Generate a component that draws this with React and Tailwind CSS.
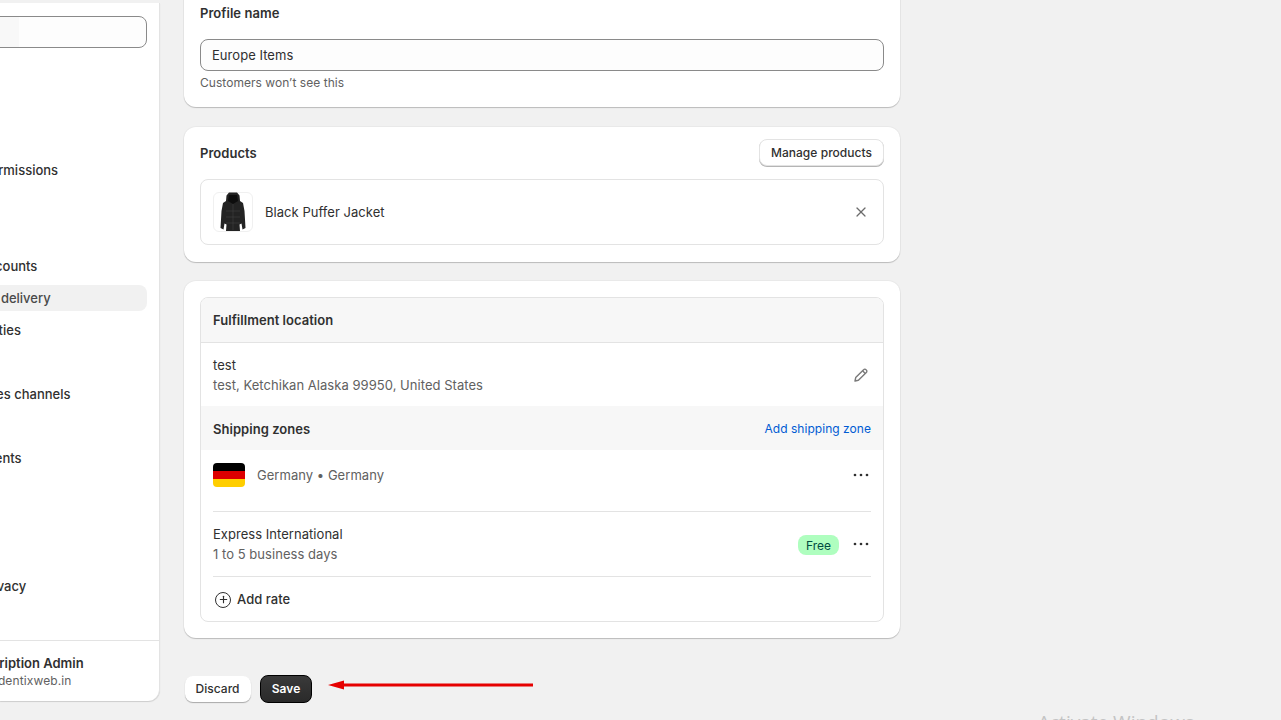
import { Plus, X } from "lucide-react";

const font = { fontFamily: "Inter, 'Noto Sans', sans-serif" };

const Dots = () => (
  <svg width="16" height="4" viewBox="0 0 16 4" className="fill-[#303030]">
    <circle cx="2" cy="2" r="1.35" />
    <circle cx="8" cy="2" r="1.35" />
    <circle cx="14" cy="2" r="1.35" />
  </svg>
);

const Jacket = () => (
  <svg width="30" height="40" viewBox="0 0 30 40">
    <path
      d="M11 0.5h8l2.5 3 .5 5.5 3 2 1.5 8 1 17-3 1.500-1-6-2 1 .5 6.500H8l.5-6.500-2-1-1 6-3-1.500 1-17 1.500-8 3-2 .5-5.500z"
      fill="#232323"
    />
    <path d="M11 3h8l1 6-5 3-5-3z" fill="#0d0d0d" />
    <path d="M15 12v26M8 19h14M8 25h14M8 31h14" stroke="#3d3d3d" strokeWidth="0.7" fill="none" />
  </svg>
);

const Pencil = () => (
  <svg width="16" height="16" viewBox="0 0 16 16" fill="none" stroke="#7a7a7a" strokeWidth="1.4" strokeLinejoin="round">
    <path d="M2 14l.7-3.400 7.900-7.900a1.700 1.700 0 0 1 2.500 0l.2.2a1.700 1.700 0 0 1 0 2.500l-7.900 7.900z" />
    <path d="M9.600 3.800l2.600 2.600" />
  </svg>
);

const NavItem = ({ label, active, className = "" }) => (
  <div
    className={`h-[26px] pt-px flex items-center rounded-lg -ml-[90px] pl-[6px] mr-3 whitespace-nowrap text-[13px] font-medium ${
      active ? "bg-[#f1f1f1] text-[#4a4a4a]" : "text-[#303030]"
    } ${className}`}
  >
    {label}
  </div>
);

const Sidebar = () => (
  <aside className="w-[160px] h-[698px] mt-[3px] shrink-0 bg-white border-r border-[#e3e3e3] rounded-br-xl shadow-[0_1px_1px_rgba(0,0,0,0.15)] overflow-hidden flex flex-col">
    <div className="flex-1 pt-[13px]">
      <div className="h-8 -ml-4 mr-3 rounded-lg border border-[#8a8a8a] bg-[#fdfdfd] flex">
        <div className="w-[34px] bg-[#f8f8f8] rounded-l-lg" />
      </div>
      <NavItem label="Users and permissions" className="mt-[109px]" />
      <NavItem label="Customer accounts" className="mt-[70px]" />
      <NavItem label="Shipping and delivery" active className="mt-[6px]" />
      <NavItem label="Taxes and duties" className="mt-[6px]" />
      <NavItem label="Apps and sales channels" className="mt-[38px]" />
      <NavItem label="Customer events" className="mt-[38px]" />
      <NavItem label="Customer privacy" className="mt-[102px]" />
    </div>
    <div className="h-[61px] border-t border-[#e3e3e3] -ml-[40px] pt-[13px] whitespace-nowrap">
      <div className="text-[13px] font-semibold text-[#303030] leading-[18px]">Subscription Admin</div>
      <div className="mt-px -ml-[9px] text-xs text-[#616161] leading-4 tracking-[0.01em]">admin@dentixweb.in</div>
    </div>
  </aside>
);

const Card = ({ children, className = "" }) => (
  <section className={`bg-white rounded-xl shadow-[0_1px_1px_rgba(0,0,0,0.2),0_0_0_1px_rgba(0,0,0,0.03)] ${className}`}>
    {children}
  </section>
);

export default function App() {
  return (
    <div className="relative h-[720px] w-full overflow-hidden bg-[#f1f1f1] flex text-[13px] text-[#303030]" style={font}>
      <Sidebar />

      <main className="w-[716px] ml-6 -mt-[14px] flex flex-col shrink-0 tracking-[0.04px]">
        <Card className="h-[121px] px-4 pt-[17px]">
          <h2 className="font-semibold leading-5">Profile name</h2>
          <div className="mt-4 h-8 pt-px rounded-lg border border-[#8a8a8a] bg-[#fdfdfd] pl-[11px] flex items-center">
            Europe Items
          </div>
          <p className="mt-[4px] text-xs text-[#616161] leading-4">Customers won’t see this</p>
        </Card>

        <Card className="mt-[20px] h-[135px] p-4 pt-[11px]">
          <div className="flex items-center justify-between h-[28px]">
            <h2 className="mt-1 font-semibold">Products</h2>
            <button className="h-[27px] w-[125px] pt-px rounded-lg bg-white border border-[#e3e3e3] shadow-[0_1px_0_#b5b5b5] text-xs font-medium">
              Manage products
            </button>
          </div>
          <div className="mt-[13px] h-[66px] rounded-lg border border-[#e3e3e3] flex items-center pl-3 pr-[14px]">
            <div className="w-10 h-10 rounded-md border border-[#f0f0f0] flex items-center justify-center">
              <Jacket />
            </div>
            <span className="ml-3 pt-[2px] flex-1">Black Puffer Jacket</span>
            <X size={16} strokeWidth={1.8} className="text-[#6b6b6b]" />
          </div>
        </Card>

        <Card className="mt-[19px] h-[357px] p-4">
          <div className="h-[325px] rounded-lg border border-[#e3e3e3] overflow-hidden">
            <div className="h-[45px] pt-[2px] bg-[#f7f7f7] border-b border-[#e3e3e3] px-3 flex items-center font-semibold">
              Fulfillment location
            </div>
            <div className="h-[63px] pl-3 pr-[14px] flex items-center justify-between">
              <div className="leading-5">
                <div>test</div>
                <div className="text-[#616161]">test, Ketchikan Alaska 99950, United States</div>
              </div>
              <Pencil />
            </div>
            <div className="h-[44px] pt-[2px] bg-[#f7f7f7] px-3 flex items-center justify-between">
              <span className="mt-[2px] font-semibold">Shipping zones</span>
              <a className="text-xs text-[#005bd3]">Add shipping zone</a>
            </div>
            <div className="mx-3 h-[62px] border-b border-[#e3e3e3] pt-[13px] flex items-start">
              <div className="w-8 h-6 rounded overflow-hidden flex flex-col shrink-0">
                <div className="flex-1 bg-black" />
                <div className="flex-1 bg-[#dd0000]" />
                <div className="flex-1 bg-[#ffce00]" />
              </div>
              <span className="ml-3 flex-1 leading-6 text-[#616161]">Germany • Germany</span>
              <div className="mt-[10px] mr-[2px]"><Dots /></div>
            </div>
            <div className="mx-3 h-[65px] border-b border-[#e3e3e3] flex items-center">
              <div className="flex-1 leading-5">
                <div>Express International</div>
                <div className="text-[#616161]">1 to 5 business days</div>
              </div>
              <span className="w-[41px] h-5 pt-[2px] mt-[2px] rounded-lg bg-[#affebf] text-[#014b40] text-xs flex items-center justify-center">
                Free
              </span>
              <div className="ml-[14px] mr-[2px]"><Dots /></div>
            </div>
            <div className="h-[45px] pl-[14px] flex items-center font-medium">
              <span className="w-4 h-4 rounded-full border-[1.5px] border-[#303030] flex items-center justify-center">
                <Plus size={11} strokeWidth={2.5} />
              </span>
              <span className="ml-[6px]">Add rate</span>
            </div>
          </div>
        </Card>

        <div className="mt-[37px] flex items-center">
          <button className="ml-px pr-px h-[26px] w-[66px] rounded-lg bg-white shadow-[0_1px_1px_rgba(0,0,0,0.3)] text-xs font-medium">
            Discard
          </button>
          <button className="ml-[9px] h-[28px] w-[52px] rounded-lg bg-gradient-to-b from-[#3a3a3a] to-[#2a2a2a] border border-black text-white text-xs font-semibold">
            Save
          </button>
          <svg width="206" height="10" viewBox="0 0 206 10" className="ml-[16px] mb-[9px]">
            <path d="M0 5l16-4.500v3h189v3H16v3z" fill="#e60000" />
          </svg>
        </div>
      </main>

      <div className="absolute left-[1038px] top-[708px] text-[19px] text-[#c4c4c4] whitespace-nowrap" style={{ fontFamily: "'Open Sans', sans-serif" }}>
        Activate Windows
      </div>
    </div>
  );
}
